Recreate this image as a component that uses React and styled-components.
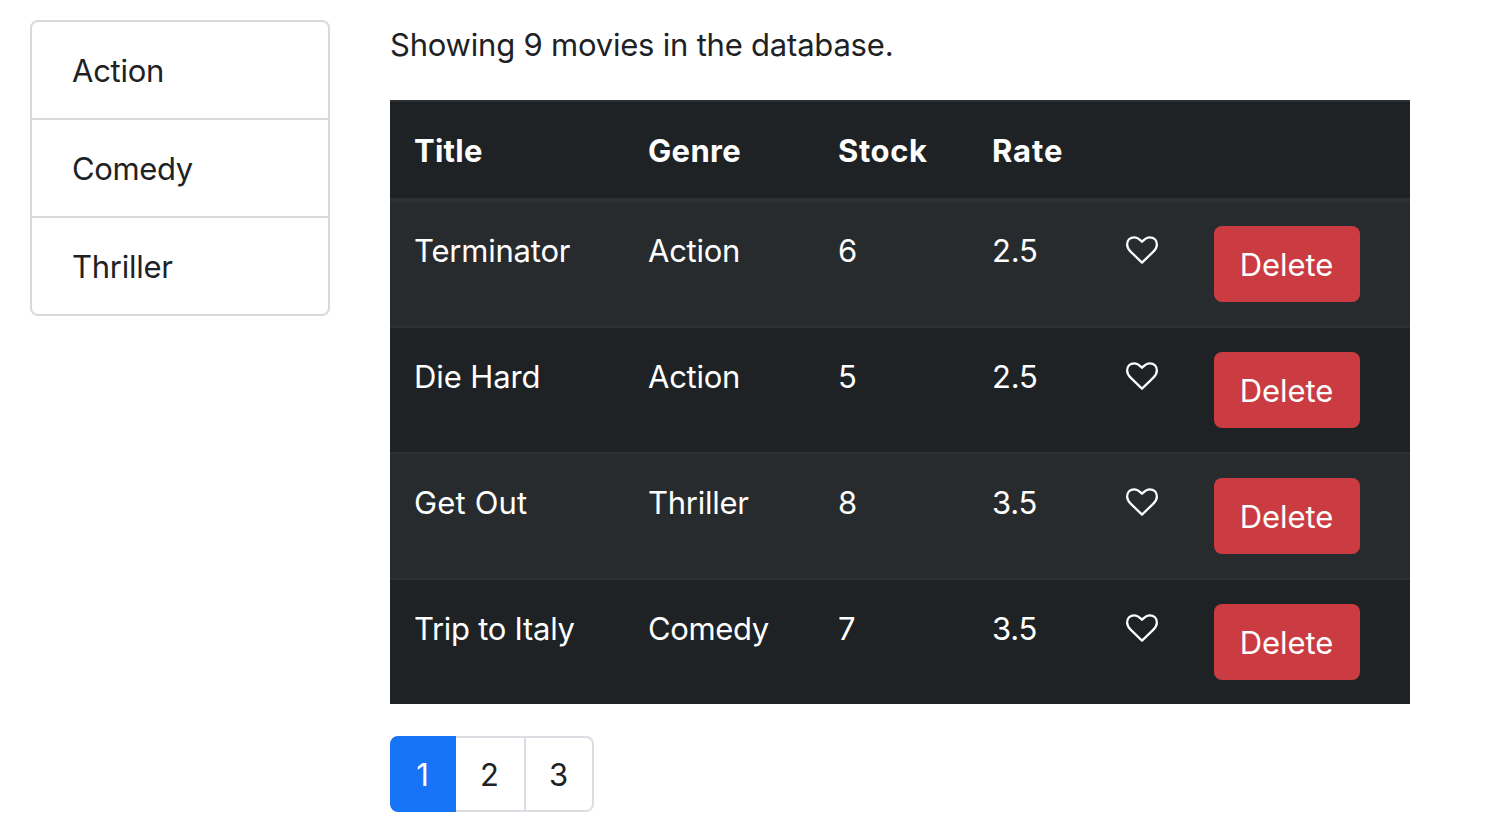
import React from "react";
import styled, { createGlobalStyle } from "styled-components";

const GlobalStyle = createGlobalStyle`
  *, *::before, *::after { box-sizing: border-box; }
  body {
    margin: 0;
    background: #fff;
    color: #1e2225;
    font-family: Inter, "Liberation Sans", sans-serif;
    font-size: 31px;
    line-height: 48px;
    overflow: hidden;
  }
`;

const Page = styled.main`
  display: flex;
  align-items: flex-start;
  gap: 60px;
  padding: 20px 30px 0;
`;

const ListGroup = styled.ul`
  width: 300px;
  margin: 0;
  padding: 0;
  list-style: none;
  border: 2px solid #d9d9da;
  border-radius: 8px;
`;

const ListItem = styled.li`
  padding: 25px 40px 23px;
  height: ${(p) => (p.$last ? 96 : 98)}px;
  border-bottom: ${(p) => (p.$last ? "0" : "2px solid #d9d9da")};
`;

const Label = styled.span`
  display: inline-block;
  white-space: nowrap;
  letter-spacing: ${(p) => p.$track || 0}px;
`;

const Content = styled.section`
  width: 1020px;
`;

const Summary = styled.p`
  margin: 0 0 31px;
  padding-top: 1px;
`;

const Table = styled.table`
  width: 1020px;
  table-layout: fixed;
  border-collapse: separate;
  border-spacing: 0;
  background: #1e2225;
  color: #fff;
`;

const Col = styled.col`
  width: ${(p) => p.$width}px;
`;

const HeadCell = styled.th`
  height: 102px;
  padding: 25px 24px 23px;
  border-top: 2px solid #2d3134;
  border-bottom: 4px solid #2d3134;
  text-align: left;
  vertical-align: top;
  font-weight: 650;
`;

const Row = styled.tr`
  background: ${(p) => (p.$striped ? "#272b2e" : "#1e2225")};
`;

const Cell = styled.td`
  height: ${(p) => (p.$first ? 124 : 126)}px;
  padding: 25px 24px 23px;
  border-top: ${(p) => (p.$first ? "0" : "2px solid #2d3134")};
  vertical-align: top;
`;

const ActionCell = styled(Cell)`
  padding: 24px;
`;

const HeartIcon = styled.svg`
  display: block;
  width: 32px;
  height: 32px;
  margin-top: 8.4px;
  fill: currentColor;
`;

const DeleteButton = styled.button`
  display: flex;
  align-items: center;
  justify-content: center;
  width: 146px;
  height: 76px;
  padding: 2px 1px 0 0;
  border: 0;
  border-radius: 8px;
  background: #ca3c41;
  color: #fff;
  font: inherit;
`;

const Pagination = styled.nav`
  display: flex;
  width: 204px;
  height: 76px;
  margin-top: 32px;
`;

const PageLink = styled.a`
  display: flex;
  align-items: center;
  justify-content: center;
  width: ${(p) => (p.$active ? 66 : p.$last ? 68 : 70)}px;
  padding: 2px 1px 0 0;
  border: 2px solid ${(p) => (p.$active ? "#1874f6" : "#dadee2")};
  border-left-width: ${(p) => (p.$active ? 2 : 0)}px;
  border-radius: ${(p) => (p.$active ? "8px 0 0 8px" : p.$last ? "0 8px 8px 0" : "0")};
  background: ${(p) => (p.$active ? "#1874f6" : "#fff")};
  color: ${(p) => (p.$active ? "#fff" : "#1e2225")};
`;

const genres = {
  Action: -0.25,
  Comedy: -0.35,
  Thriller: -0.25,
};

const columns = [
  { width: 234, title: "Title", track: 0.25 },
  { width: 190, title: "Genre", track: 0.35 },
  { width: 154, title: "Stock", track: 0.6 },
  { width: 134, title: "Rate", track: 0.9 },
  { width: 88 },
  { width: 220 },
];

const movies = [
  { title: "Terminator", track: -0.2, genre: "Action", stock: 6, rate: "2.5" },
  { title: "Die Hard", track: -0.1, genre: "Action", stock: 5, rate: "2.5" },
  { title: "Get Out", track: 0.15, genre: "Thriller", stock: 8, rate: "3.5" },
  { title: "Trip to Italy", track: -0.28, genre: "Comedy", stock: 7, rate: "3.5" },
];

function Heart() {
  return (
    <HeartIcon viewBox="0 0 1792 1792" aria-hidden="true">
      <path d="M1664 596q0-81-21.5-143t-55-98.5-81.5-59.5-94-31-98-8-112 25.5-110.5 64-86.5 72-60 61.5q-18 22-49 22t-49-22q-24-28-60-61.5t-86.5-72-110.5-64-112-25.5-98 8-94 31-81.5 59.5-55 98.5-21.5 143q0 168 187 355l581 560 580-559q188-188 188-356zm128 0q0 221-229 450l-623 600q-18 18-44 18t-44-18l-624-602q-10-8-27.5-26t-55.5-65.5-68-97.5-53.5-121-23.5-138q0-220 127-344t351-124q62 0 126.5 21.5t120 58 95.5 68.5 76 68q36-36 76-68t95.5-68.5 120-58 126.5-21.5q224 0 351 124t127 344z" />
    </HeartIcon>
  );
}

export default function App() {
  return (
    <>
      <GlobalStyle />
      <Page>
        <ListGroup>
          {Object.entries(genres).map(([name, track], i) => (
            <ListItem key={name} $last={i === 2}>
              <Label $track={track}>{name}</Label>
            </ListItem>
          ))}
        </ListGroup>
        <Content>
          <Summary>
            <Label $track={-0.21}>Showing 9 movies in the database.</Label>
          </Summary>
          <Table>
            <colgroup>
              {columns.map((c, i) => (
                <Col key={i} $width={c.width} />
              ))}
            </colgroup>
            <thead>
              <tr>
                {columns.map((c, i) => (
                  <HeadCell key={i}>
                    {c.title && <Label $track={c.track}>{c.title}</Label>}
                  </HeadCell>
                ))}
              </tr>
            </thead>
            <tbody>
              {movies.map((m, i) => (
                <Row key={m.title} $striped={i % 2 === 0}>
                  <Cell $first={i === 0}><Label $track={m.track}>{m.title}</Label></Cell>
                  <Cell $first={i === 0}><Label $track={genres[m.genre]}>{m.genre}</Label></Cell>
                  <Cell $first={i === 0}>{m.stock}</Cell>
                  <Cell $first={i === 0}><Label $track={-0.25}>{m.rate}</Label></Cell>
                  <ActionCell $first={i === 0}><Heart /></ActionCell>
                  <ActionCell $first={i === 0}>
                    <DeleteButton><Label $track={-0.1}>Delete</Label></DeleteButton>
                  </ActionCell>
                </Row>
              ))}
            </tbody>
          </Table>
          <Pagination>
            <PageLink $active>1</PageLink>
            <PageLink>2</PageLink>
            <PageLink $last>3</PageLink>
          </Pagination>
        </Content>
      </Page>
    </>
  );
}
